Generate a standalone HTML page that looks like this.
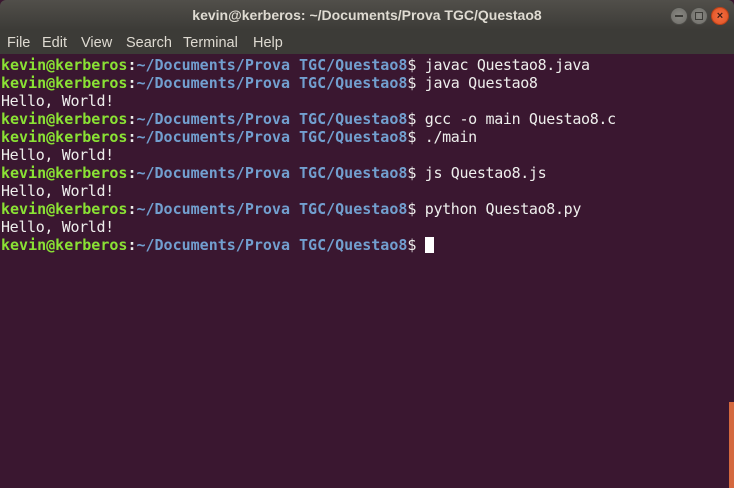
<!DOCTYPE html>
<html><head><style>
body{margin:0;width:734px;height:488px;overflow:hidden;background:#3a1730;font-family:"Liberation Sans",sans-serif;}
.title{position:absolute;left:0;top:0;width:734px;height:30px;background:linear-gradient(#514f4a,#3c3b37);border-radius:6px 6px 0 0;}
.title span{position:absolute;left:0;right:0;top:7px;text-align:center;color:#dfdbd2;font-weight:bold;font-size:14px;}
.menu{position:absolute;top:30px;left:0;width:734px;height:24px;background:#3c3b37;color:#dfdbd2;font-size:14.5px;}
.menu span{position:absolute;top:5px;}
.btn{position:absolute;top:7px;width:16px;height:16px;border-radius:50%;background:radial-gradient(#8a8984,#6d6c67);border:1px solid #4a4945;}
.term{position:absolute;top:56px;left:1px;font-family:"DejaVu Sans Mono","Liberation Mono",monospace;font-size:15px;line-height:18px;color:#eeeeec;white-space:pre;font-weight:bold;}
.g{color:#8ae234}.b{color:#729fcf}.w{font-weight:normal;letter-spacing:-0.35px}
.cur{display:inline-block;width:9px;height:16px;background:#fff;vertical-align:-3px}
.sb{position:absolute;left:729px;top:402px;width:5px;height:86px;background:#d4683e;}
</style></head><body>
<div class="title"><span>kevin@kerberos: ~/Documents/Prova TGC/Questao8</span>
<div class="btn" style="left:670px"><div style="position:absolute;left:4px;top:7px;width:8px;height:1.5px;background:#3c3b37"></div></div>
<div class="btn" style="left:690px"><div style="position:absolute;left:4px;top:4px;width:6px;height:6px;border:1.5px solid #3c3b37"></div></div>
<div class="btn" style="left:711px;background:radial-gradient(#f27046,#e0501f);border-color:#b9421a;color:#3c1a10;font-size:11px;text-align:center;line-height:16px;font-weight:bold">×</div>
</div>
<div class="menu"><span style="left:7px">File</span><span style="left:42px">Edit</span><span style="left:81px">View</span><span style="left:126px">Search</span><span style="left:183px">Terminal</span><span style="left:253px">Help</span></div>
<div class="term"><span class="g">kevin@kerberos</span>:<span class="b">~/Documents/Prova TGC/Questao8</span><span class="w">$ javac Questao8.java</span>
<span class="g">kevin@kerberos</span>:<span class="b">~/Documents/Prova TGC/Questao8</span><span class="w">$ java Questao8</span>
<span class="w">Hello, World!</span>
<span class="g">kevin@kerberos</span>:<span class="b">~/Documents/Prova TGC/Questao8</span><span class="w">$ gcc -o main Questao8.c</span>
<span class="g">kevin@kerberos</span>:<span class="b">~/Documents/Prova TGC/Questao8</span><span class="w">$ ./main</span>
<span class="w">Hello, World!</span>
<span class="g">kevin@kerberos</span>:<span class="b">~/Documents/Prova TGC/Questao8</span><span class="w">$ js Questao8.js</span>
<span class="w">Hello, World!</span>
<span class="g">kevin@kerberos</span>:<span class="b">~/Documents/Prova TGC/Questao8</span><span class="w">$ python Questao8.py</span>
<span class="w">Hello, World!</span>
<span class="g">kevin@kerberos</span>:<span class="b">~/Documents/Prova TGC/Questao8</span><span class="w">$ <span class="cur"></span></span></div>
<div class="sb"></div>
</body></html>
